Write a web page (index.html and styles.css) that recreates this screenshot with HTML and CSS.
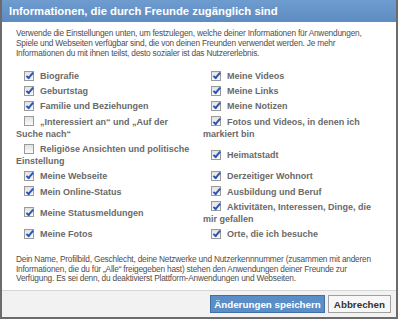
FILE: index.html
```html
<!DOCTYPE html>
<html lang="de">
<head>
  <meta charset="UTF-8">
  <title>Informationen, die durch Freunde zugänglich sind</title>
  <link rel="stylesheet" href="styles.css">
</head>
<body>
  <div class="dialog">
    <div class="title">Informationen, die durch Freunde zugänglich sind</div>

    <div class="content">
      <p class="intro">Verwende die Einstellungen unten, um festzulegen, welche deiner Informationen für Anwendungen, Spiele und Webseiten verfügbar sind, die von deinen Freunden verwendet werden. Je mehr Informationen du mit ihnen teilst, desto sozialer ist das Nutzererlebnis.</p>

      <div class="options">
        <label class="opt"><span class="box on"></span>Biografie</label>
        <label class="opt"><span class="box on"></span>Meine Videos</label>
        <label class="opt"><span class="box on"></span>Geburtstag</label>
        <label class="opt"><span class="box on"></span>Meine Links</label>
        <label class="opt"><span class="box on"></span>Familie und Beziehungen</label>
        <label class="opt"><span class="box on"></span>Meine Notizen</label>
        <label class="opt"><span class="box"></span>„Interessiert an“ und „Auf der<br>Suche nach“</label>
        <label class="opt"><span class="box on"></span>Fotos und Videos, in denen ich markiert bin</label>
        <label class="opt"><span class="box"></span>Religiöse Ansichten und politische Einstellung</label>
        <label class="opt"><span class="box on"></span>Heimatstadt</label>
        <label class="opt"><span class="box on"></span>Meine Webseite</label>
        <label class="opt"><span class="box on"></span>Derzeitiger Wohnort</label>
        <label class="opt"><span class="box on"></span>Mein Online-Status</label>
        <label class="opt"><span class="box on"></span>Ausbildung und Beruf</label>
        <label class="opt"><span class="box on"></span>Meine Statusmeldungen</label>
        <label class="opt"><span class="box on"></span>Aktivitäten, Interessen, Dinge, die mir gefallen</label>
        <label class="opt"><span class="box on"></span>Meine Fotos</label>
        <label class="opt"><span class="box on"></span>Orte, die ich besuche</label>
      </div>

      <p class="note">Dein Name, Profilbild, Geschlecht, deine Netzwerke und Nutzerkennnummer (zusammen mit anderen Informationen, die du für „Alle“ freigegeben hast) stehen den Anwendungen deiner Freunde zur Verfügung. Es sei denn, du deaktivierst Plattform-Anwendungen und Webseiten.</p>
    </div>

    <div class="footer">
      <button class="btn primary">Änderungen speichern</button>
      <button class="btn">Abbrechen</button>
    </div>
  </div>
</body>
</html>
```

FILE: styles.css
```css
body {
  margin: 0;
  background: #ffffff;
  font-family: "Liberation Sans", Arial, sans-serif;
}

.dialog {
  width: 394px;
  height: 317px;
  border: 2px solid #6b6b6b;
  border-top: none;
  display: flex;
  flex-direction: column;
  background: #ffffff;
}

.title {
  height: 22px;
  line-height: 22px;
  padding-left: 7px;
  background: linear-gradient(#6f9ccf, #5d8cc2);
  color: #ffffff;
  font-weight: bold;
  font-size: 11.3px;
}

.content {
  flex: 1;
  padding: 6px 20px 0 14px;
}

.intro,
.note {
  margin: 0;
  font-size: 8.3px;
  letter-spacing: -0.2px;
  line-height: 10px;
  color: #4e4e4e;
}

.options {
  display: grid;
  grid-template-columns: 187px 1fr;
  align-items: center;
  margin-top: 9px;
}

.opt {
  padding-top: 3px;
  font-size: 9px;
  font-weight: bold;
  line-height: 12.2px;
  color: #6a6a6a;
}

.box {
  display: inline-block;
  width: 8px;
  height: 8px;
  margin: 0 6px 0 8px;
  vertical-align: -1.5px;
  border: 1px solid #9a9a9a;
  background: linear-gradient(#e2e2e2, #fafafa);
  position: relative;
}

.box.on::after {
  content: "";
  position: absolute;
  left: 2.5px;
  top: -0.5px;
  width: 2px;
  height: 5.5px;
  border: solid #2b55b8;
  border-width: 0 2px 2px 0;
  transform: rotate(40deg);
}

.note {
  margin-top: 15px;
  line-height: 9.5px;
}

.footer {
  height: 26px;
  border-top: 1px solid #d6d6d6;
  background: #f2f2f2;
  display: flex;
  justify-content: flex-end;
  align-items: center;
  gap: 3px;
  padding-right: 5px;
}

.btn {
  height: 18px;
  padding: 0 5px;
  font-family: "Liberation Sans", Arial, sans-serif;
  font-size: 9.8px;
  font-weight: bold;
  color: #333333;
  background: #f7f7f7;
  border: 1px solid #a0a0a0;
}

.btn.primary {
  padding: 0 3px;
  color: #ffffff;
  background: #5b8ec6;
  border-color: #3f6fa6;
}
```
